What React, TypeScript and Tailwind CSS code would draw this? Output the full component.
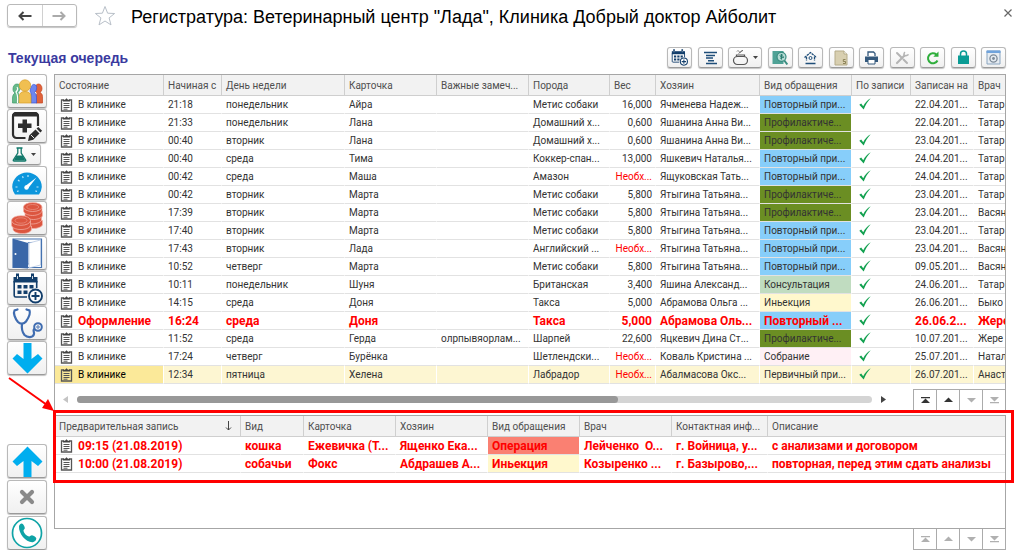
import type { ReactNode } from 'react'
import { clsx } from 'clsx'

type QueueRow = {
  state: string
  time: string
  day: string
  card: string
  note?: string
  breed: string
  weight: string
  owner: string
  kind: string
  booked: boolean
  date: string
  doctor: string
  urgent?: boolean
  selected?: boolean
}

const REPEAT = 'Повторный при...'
const PREVENT = 'Профилактиче...'
const NO_WEIGHT = 'Необх...'

const KIND_COLORS: Record<string, string> = {
  [REPEAT]: 'bg-[#87cefa]',
  'Повторный ...': 'bg-[#87cefa]',
  [PREVENT]: 'bg-[#6b8e23]',
  Консультация: 'bg-[#c0dcc0]',
  Иньекция: 'bg-[#fff8cd]',
  Собрание: 'bg-[#fff0f5]',
  Операция: 'bg-[#fa8072]',
}

const QUEUE: QueueRow[] = [
  { state: 'В клинике', time: '21:18', day: 'понедельник', card: 'Айра', breed: 'Метис собаки', weight: '16,000', owner: 'Ячменева Надеж...', kind: REPEAT, booked: true, date: '22.04.201...', doctor: 'Татар' },
  { state: 'В клинике', time: '21:33', day: 'понедельник', card: 'Лана', breed: 'Домашний х...', weight: '0,600', owner: 'Яшанина Анна Ви...', kind: PREVENT, booked: false, date: '22.04.201...', doctor: 'Татар' },
  { state: 'В клинике', time: '00:40', day: 'вторник', card: 'Лана', breed: 'Домашний х...', weight: '0,600', owner: 'Яшанина Анна Ви...', kind: PREVENT, booked: true, date: '23.04.201...', doctor: 'Татар' },
  { state: 'В клинике', time: '00:40', day: 'среда', card: 'Тима', breed: 'Коккер-спан...', weight: '13,000', owner: 'Яшкевич Наталья...', kind: REPEAT, booked: true, date: '24.04.201...', doctor: 'Татар' },
  { state: 'В клинике', time: '00:42', day: 'среда', card: 'Маша', breed: 'Амазон', weight: NO_WEIGHT, owner: 'Ящуковская Тать...', kind: REPEAT, booked: true, date: '24.04.201...', doctor: 'Татар' },
  { state: 'В клинике', time: '00:42', day: 'вторник', card: 'Марта', breed: 'Метис собаки', weight: '5,800', owner: 'Ятыгина Татьяна...', kind: PREVENT, booked: true, date: '23.04.201...', doctor: 'Татар' },
  { state: 'В клинике', time: '17:39', day: 'вторник', card: 'Марта', breed: 'Метис собаки', weight: '5,800', owner: 'Ятыгина Татьяна...', kind: PREVENT, booked: true, date: '23.04.201...', doctor: 'Васян' },
  { state: 'В клинике', time: '17:40', day: 'вторник', card: 'Марта', breed: 'Метис собаки', weight: '5,800', owner: 'Ятыгина Татьяна...', kind: REPEAT, booked: true, date: '23.04.201...', doctor: 'Татар' },
  { state: 'В клинике', time: '17:43', day: 'вторник', card: 'Лада', breed: 'Английский ...', weight: NO_WEIGHT, owner: 'Ятыгина Татьяна...', kind: REPEAT, booked: true, date: '23.04.201...', doctor: 'Васян' },
  { state: 'В клинике', time: '10:52', day: 'четверг', card: 'Марта', breed: 'Метис собаки', weight: '5,800', owner: 'Ятыгина Татьяна...', kind: REPEAT, booked: true, date: '09.05.201...', doctor: 'Васян' },
  { state: 'В клинике', time: '10:11', day: 'понедельник', card: 'Шуня', breed: 'Британская', weight: '3,400', owner: 'Яшина Александ...', kind: 'Консультация', booked: true, date: '24.06.201...', doctor: 'Татар' },
  { state: 'В клинике', time: '14:15', day: 'среда', card: 'Доня', breed: 'Такса', weight: '5,000', owner: 'Абрамова Ольга ...', kind: 'Иньекция', booked: true, date: '26.06.201...', doctor: 'Быко' },
  { state: 'Оформление', time: '16:24', day: 'среда', card: 'Доня', breed: 'Такса', weight: '5,000', owner: 'Абрамова Оль...', kind: 'Повторный ...', booked: true, date: '26.06.2...', doctor: 'Жере', urgent: true },
  { state: 'В клинике', time: '11:52', day: 'среда', card: 'Герда', note: 'олрпывяорлам...', breed: 'Шарпей', weight: '22,600', owner: 'Яцкевич Дина Ст...', kind: PREVENT, booked: true, date: '10.07.201...', doctor: 'Жере' },
  { state: 'В клинике', time: '17:24', day: 'четверг', card: 'Бурёнка', breed: 'Шетлендски...', weight: NO_WEIGHT, owner: 'Коваль Кристина ...', kind: 'Собрание', booked: true, date: '25.07.201...', doctor: 'Натал' },
  { state: 'В клинике', time: '12:34', day: 'пятница', card: 'Хелена', breed: 'Лабрадор', weight: NO_WEIGHT, owner: 'Абалмасова Окс...', kind: 'Первичный при...', booked: true, date: '26.07.201...', doctor: 'Анаст', selected: true },
]

const BOOKINGS = [
  ['09:15 (21.08.2019)', 'кошка', 'Ежевичка (Т...', 'Ященко Ека...', 'Операция', 'Лейченко  О...', 'г. Войница, у...', 'с анализами и договором'],
  ['10:00 (21.08.2019)', 'собачьи', 'Фокс', 'Абдрашев А...', 'Иньекция', 'Козыренко ...', 'г. Базырово,...', 'повторная, перед этим сдать анализы'],
]

function ClipboardIcon() {
  return (
    <svg width="13" height="14" viewBox="0 0 13 14" className="shrink-0" aria-hidden>
      <path d="M4 2H1.5v11h10V2H9" fill="none" stroke="#555" strokeWidth="1.3" />
      <path d="M3 3.6V1.8h2L6.5.3 8 1.8h2v1.8z" fill="#444" />
      <path d="M3.5 5.5h6M3.5 7.5h6M3.5 9.5h6M3.5 11.2h4" stroke="#555" strokeWidth="1" />
    </svg>
  )
}

function CheckIcon() {
  return (
    <svg width="12" height="13" viewBox="0 0 12 13" className="ml-[3px]" aria-label="да">
      <path d="M.3 6.800 2.200 5.500l2 2.800C6 4.800 8.200 2 11.700.200c-3 3.200-5.200 6.700-7 11.300z" fill="#12a150" />
    </svg>
  )
}

const buttonBase =
  'flex items-center justify-center rounded-[3px] border border-[#b9b9b9] border-b-[#9a9a9a] bg-linear-to-b from-white to-[#f0f0f0] shadow-[0_1px_1px_#c4c4c4]'

function SideButton({ title, small, children }: { title: string; small?: boolean; children: ReactNode }) {
  return (
    <button
      type="button"
      title={title}
      aria-label={title}
      className={clsx(buttonBase, small ? 'h-[21px] w-[34px] gap-1' : 'h-[34px] w-10')}
    >
      {children}
    </button>
  )
}

function ToolButton({ title, wide, children }: { title: string; wide?: boolean; children: ReactNode }) {
  return (
    <button
      type="button"
      title={title}
      aria-label={title}
      className={clsx(buttonBase, 'h-[21px]', wide ? 'w-[34px] gap-1' : 'w-[25px]')}
    >
      {children}
    </button>
  )
}

function Caret() {
  return (
    <svg width="5" height="3" viewBox="0 0 5 3" aria-hidden>
      <path d="M0 0h5L2.500 3z" fill="#444" />
    </svg>
  )
}

function PeopleIcon() {
  return (
    <svg width="31" height="25" viewBox="0 0 31 25" strokeWidth=".7" aria-hidden>
      <g fill="#e0623a" stroke="#c4461f">
        <path d="M24 24v-6c0-2 .500-3 1.500-4-2-1-2.500-2-2.500-4 0-3 1.500-5 3.500-5s3.500 2 3.500 4.500c0 2-.800 3-2 4 1.500.800 2.500 2 2.500 4V24z" />
      </g>
      <g fill="#6d86f0" stroke="#3b55d0">
        <path d="M19 24v-9c0-1-.500-2-1-3 1-6 3-7 4.500-6.500 2 .500 2.500 2 2 4.500-.300 1.800-1 2.500-2 3.500 1.500 1.500 2 3 2 5V24z" />
      </g>
      <g fill="#66b98a" stroke="#3f9c68">
        <path d="M.500 24v-5c0-2.500 1-4 2.500-5-1.500-1-2-2.200-2-4 0-3 1.500-5 4-5s4 2 4 4c-1.500 2-2 3.500-3 4.500 1 2 1 6 .500 10.500z" />
      </g>
      <path d="M5 8c1.500 2 0 4-1 5 1.500 2 2 6 1.500 11" fill="none" stroke="#fff" strokeWidth="1.200" />
      <g fill="#f0bf51" stroke="#d99e28">
        <path d="M7.200 24v-6.500c0-3 2-5 5.800-5s6 2 6 5V24z" />
        <circle cx="13" cy="6.500" r="5.700" />
      </g>
    </svg>
  )
}

function AddRecordIcon() {
  return (
    <svg width="32" height="31" viewBox="0 0 32 31" aria-hidden>
      <path d="M14.500 27H5.500A3.500 3.500 0 0 1 2 23.500V5.500A3.500 3.500 0 0 1 5.500 2h18A3.500 3.500 0 0 1 27 5.500V15" fill="none" stroke="#2d2d2d" strokeWidth="2.200" />
      <path d="M1 5.500A4 4 0 0 1 5 1h19a4 4 0 0 1 4 4.500z" fill="#2d2d2d" />
      <path d="M11.500 8.500h4.500v4h4.500V17H16v4.500h-4.500V17H7v-4.500h4.500z" fill="#2d2d2d" />
      <path d="m17 30 1.200-5.500 6.300-6 4 4-6.300 6.300zM25.500 17.500l1.800-1.600 3.800 3.900-1.700 1.700z" fill="#2d2d2d" />
      <path d="m20 24 3 3" stroke="#fff" strokeWidth=".9" />
    </svg>
  )
}

function FlaskIcon() {
  return (
    <svg width="15" height="15" viewBox="0 0 15 15" aria-hidden>
      <path d="M4.500 1h6M5.800 1v5L1.300 13q-.3 1 .8 1h10.800q1.100 0 .8-1L9.200 6V1" fill="none" stroke="#11786a" strokeWidth="1.300" />
      <path d="M4.500 8.500h6l2.700 4.800H1.800z" fill="#11786a" />
    </svg>
  )
}

function GaugeIcon() {
  return (
    <svg width="30" height="23" viewBox="0 0 30 23" aria-hidden>
      <path d="M3 22.500A14.800 14.800 0 0 1 .200 15C.200 6.800 6.800.400 15 .400S29.800 6.800 29.800 15a14.800 14.800 0 0 1-2.800 7.500z" fill="#0c96dc" />
      <path d="M15.800 16.800 24.500 5.500 13.300 14z" fill="#fff" />
      <circle cx="14.500" cy="15.500" r="2.200" fill="#fff" />
      <path d="M3.500 15h2M6 8l1.500 1.300M10.500 4.300l.7 1.700M16 3v2M24.500 15h2M5 19.500l1.600-.6M25 19.500l-1.600-.6" stroke="#bfe6fa" strokeWidth="1.200" />
    </svg>
  )
}

function CoinsIcon() {
  return (
    <svg width="32" height="32" viewBox="0 0 32 32" aria-hidden>
      <g fill="#dc5640" stroke="#f3b5aa" strokeWidth=".7">
        <path d="M14 18.500v4c0 2 4 4 8.500 4s9-2 9-4v-4z" />
        <path d="M12.500 14v4c0 2 4 4 8.500 4s9.500-2 9.500-4v-4z" />
        <path d="M14 9.500v4c0 2 4 4 8.500 4s9-2 9-4v-4z" />
        <path d="M12.500 5v4c0 2 4 4.500 9 4.500s9.500-2.500 9.500-4.500V5z" />
        <ellipse cx="21.700" cy="5" rx="9.300" ry="4.500" />
        <path d="M2 24v3c0 2.500 4 4.500 9.500 4.500s9-2 9-4.500v-3z" />
        <path d="M.500 19v4c0 2.500 4 4.500 9.500 4.500s9.500-2 9.500-4.500v-4z" />
        <ellipse cx="10" cy="18.500" rx="9.500" ry="4.800" />
      </g>
      <ellipse cx="21.700" cy="5" rx="6" ry="2.500" fill="none" stroke="#e88a7a" strokeWidth=".8" />
      <ellipse cx="10" cy="18.500" rx="6" ry="2.700" fill="none" stroke="#e88a7a" strokeWidth=".8" />
    </svg>
  )
}

function DoorIcon() {
  return (
    <svg width="31" height="31" viewBox="0 0 31 31" aria-hidden>
      <path d="M1 1h28.500v28.500H1z" fill="#fff" stroke="#4472b0" strokeWidth="1.200" />
      <path d="M16 4.500h11.500V26H16z" fill="#fff" stroke="#6c8fc0" strokeWidth="1" />
      <path d="M1 .800 16 5v25.500L1 29.500z" fill="#3a67a8" />
      <path d="M17 5 28.500 2v25L17 30z" fill="#fff" stroke="#9db6d8" strokeWidth=".6" />
      <circle cx="3.500" cy="16" r="1" fill="#fff" />
    </svg>
  )
}

function CalendarPlusIcon({ size = 31 }: { size?: number }) {
  return (
    <svg width={size} height={size} viewBox="0 0 31 31" aria-hidden>
      <path d="M1.500 4h24v5.500h-24z" fill="#123e6b" />
      <path d="M5.500.500v5M20.500.500v5" stroke="#123e6b" strokeWidth="3" />
      <path d="M5.500 3v3M20.500 3v3" stroke="#fff" strokeWidth=".8" />
      <path d="M2.200 8v14.500q0 1.500 1.500 1.500H15M24.700 8v7" fill="none" stroke="#123e6b" strokeWidth="1.600" />
      <path d="M5.500 12h4v3.500h-4zM11.500 12h4v3.500h-4zM17.500 12h4v3.500h-4zM5.500 17.500h4V21h-4zM11.500 17.500h4V21h-4z" fill="#123e6b" />
      <circle cx="23.500" cy="23" r="6.500" fill="#fff" stroke="#123e6b" strokeWidth="1.900" />
      <path d="M23.500 19v8M19.500 23h8" stroke="#123e6b" strokeWidth="1.900" />
    </svg>
  )
}

function StethoscopeIcon() {
  return (
    <svg width="31" height="31" viewBox="0 0 31 31" fill="none" stroke="#3f6cb0" aria-hidden>
      <path d="M5.500 1.500 2.500 2.500C1 5 3 10.500 6 14c2.500 2.500 6 2 8-.5 2.500-3.500 4.500-8.500 3.500-11L14.500 1.500" strokeWidth="2.200" strokeLinecap="round" />
      <path d="M10 15.500c-.5 4 0 8.500 2.500 11.500 3 3 8.500 3 9.500-1 .5-2-2-4.500 1-5.500" strokeWidth="2.200" />
      <circle cx="26" cy="19" r="3.800" strokeWidth="2" />
      <circle cx="26" cy="19" r="1.200" strokeWidth="1" />
    </svg>
  )
}

function BigArrowIcon({ up }: { up?: boolean }) {
  return (
    <svg width="31" height="31" viewBox="0 0 31 31" className={clsx(up && 'rotate-180')} aria-hidden>
      <path d="M11.500 0h8v16l6.500-5 4.500 4.500L15.500 30.500.500 15.500 5 11l6.500 5z" fill="#00aeef" />
    </svg>
  )
}

function CrossIcon() {
  return (
    <svg width="16" height="16" viewBox="0 0 16 16" aria-hidden>
      <path d="m3 3 10 10M13 3 3 13" stroke="#8a8a8a" strokeWidth="4.200" strokeLinecap="round" />
    </svg>
  )
}

function PhoneIcon() {
  return (
    <svg width="32" height="32" viewBox="0 0 32 32" aria-hidden>
      <circle cx="16" cy="16" r="14.500" fill="#fff" stroke="#0fa3a6" strokeWidth="1.700" />
      <path d="M8 9.500c0-1.500 1.500-3 2.700-3 1.600 0 3.300 3.500 3.100 4.800-.2 1-1.500 1.500-1.300 2.700.5 2.500 3 5 5.500 5.500 1.200.2 1.800-1.300 3-1.200 1.500.2 4.300 2 4.300 3.200 0 2-2 3.500-3.600 3.700C15 25.700 7.500 16.500 8 9.500z" fill="#0fa3a6" />
    </svg>
  )
}

function PagerButtons({ active }: { active?: boolean }) {
  const arrows = [
    { title: 'В начало', d: 'M0 1h9v1.300H0zM4.500 2.500 9 7H0z', on: active },
    { title: 'Вверх', d: 'M4.500 1.500 9 6H0z', on: active },
    { title: 'Вниз', d: 'M0 2h9L4.500 6.500z', on: false },
    { title: 'В конец', d: 'M0 1h9L4.500 5.500zM0 6h9v1.300H0z', on: false },
  ]
  return (
    <div className="flex">
      {arrows.map((a) => (
        <button
          key={a.title}
          type="button"
          title={a.title}
          aria-label={a.title}
          className={clsx('flex h-5 w-[23px] items-center justify-center border-l border-[#ababab]', a.on ? 'text-[#333]' : 'text-[#b0b0b0]')}
        >
          <svg width="9" height="8" viewBox="0 0 9 8" aria-hidden>
            <path d={a.d} fill="currentColor" />
          </svg>
        </button>
      ))}
    </div>
  )
}

function HeadCell({ children }: { children: ReactNode }) {
  return (
    <th
      scope="col"
      className="h-[21px] overflow-hidden border-r border-b border-[#cfcfcf] bg-[#f2f2f2] pl-1 text-left font-normal whitespace-nowrap text-[#4f4f4f] last:border-r-0"
    >
      {children}
    </th>
  )
}

function Cell({ children, className }: { children?: ReactNode; className?: string }) {
  return (
    <td className={clsx('h-[18px] overflow-hidden border-r border-b border-r-white border-b-[#e2e2e2] pl-1 leading-4 whitespace-pre last:border-r-0', className)}>
      {children}
    </td>
  )
}

function Columns({ widths }: { widths: string[] }) {
  return (
    <colgroup>
      {widths.map((w, i) => (
        <col key={i} className={w} />
      ))}
    </colgroup>
  )
}

function QueueTable() {
  return (
    <table className="w-full table-fixed border-separate border-spacing-0">
      <Columns widths={['w-[109px]', 'w-[58px]', 'w-[123px]', 'w-[92px]', 'w-[92px]', 'w-[81px]', 'w-[46px]', 'w-[104px]', 'w-[92px]', 'w-[59px]', 'w-[63px]', 'w-auto']} />
      <thead>
        <tr>
          {['Состояние', 'Начиная с', 'День недели', 'Карточка', 'Важные замеч...', 'Порода', 'Вес', 'Хозяин', 'Вид обращения', 'По записи', 'Записан на', 'Врач'].map((h) => (
            <HeadCell key={h}>{h}</HeadCell>
          ))}
        </tr>
      </thead>
      <tbody>
        {QUEUE.map((r, i) => (
          <tr key={i} className={clsx(r.urgent && 'text-xs font-bold text-[#f00]', r.selected && 'bg-[#fdf6d2]')}>
            <Cell className={clsx(r.selected && 'bg-[#fbe999] text-black')}>
              <span className="flex items-center gap-[5px] pl-px">
                <ClipboardIcon />
                {r.state}
              </span>
            </Cell>
            <Cell>{r.time}</Cell>
            <Cell>{r.day}</Cell>
            <Cell>{r.card}</Cell>
            <Cell>{r.note}</Cell>
            <Cell>{r.breed}</Cell>
            <Cell className={clsx('pr-[3px] text-right', r.weight === NO_WEIGHT && 'text-[#f00]')}>{r.weight}</Cell>
            <Cell>{r.owner}</Cell>
            <Cell className={KIND_COLORS[r.kind]}>{r.kind}</Cell>
            <Cell>{r.booked && <CheckIcon />}</Cell>
            <Cell>{r.date}</Cell>
            <Cell>{r.doctor}</Cell>
          </tr>
        ))}
      </tbody>
    </table>
  )
}

function BookingTable() {
  return (
    <table className="w-full table-fixed border-separate border-spacing-0">
      <Columns widths={['w-[186px]', 'w-[63px]', 'w-[92px]', 'w-[92px]', 'w-[92px]', 'w-[92px]', 'w-[96px]', 'w-auto']} />
      <thead>
        <tr>
          <HeadCell>
            <span className="flex items-center justify-between pr-2">
              Предварительная запись
              <svg width="7" height="10" viewBox="0 0 7 10" fill="none" stroke="#444" aria-hidden>
                <path d="M3.500 0v9M1 6.500 3.500 9 6 6.500" />
              </svg>
            </span>
          </HeadCell>
          {['Вид', 'Карточка', 'Хозяин', 'Вид обращения', 'Врач', 'Контактная инф...', 'Описание'].map((h) => (
            <HeadCell key={h}>{h}</HeadCell>
          ))}
        </tr>
      </thead>
      <tbody className="text-xs font-bold text-[#f00]">
        {BOOKINGS.map((row) => (
          <tr key={row[0]}>
            {row.map((value, i) => (
              <Cell key={i} className={KIND_COLORS[value]}>
                {i === 0 ? (
                  <span className="flex items-center gap-[5px] pl-px">
                    <ClipboardIcon />
                    {value}
                  </span>
                ) : (
                  value
                )}
              </Cell>
            ))}
          </tr>
        ))}
      </tbody>
    </table>
  )
}

function Toolbar() {
  return (
    <div className="flex w-[339px] justify-between">
      <ToolButton title="Записать на приём">
        <CalendarPlusIcon size={17} />
      </ToolButton>
      <ToolButton title="График">
        <svg width="15" height="14" viewBox="0 0 15 14" stroke="#1f4e79" strokeWidth="1.500" aria-hidden>
          <path d="M1 1.500h13M3 4.500h9M3 7h7M5 9.700h6M3 12.500h11" />
        </svg>
      </ToolButton>
      <ToolButton title="Корм" wide>
        <svg width="17" height="17" viewBox="0 0 17 17" fill="none" stroke="#555" strokeWidth="1.200" aria-hidden>
          <rect x="1.500" y="7.500" width="14" height="8" rx="4" />
          <path d="M4.500 7.500V6h8v1.500" />
          <path d="M5 2.500q1-2 2 0t2 0 2-.5M6.500 4.500l4-3" strokeWidth=".8" />
        </svg>
        <Caret />
      </ToolButton>
      <ToolButton title="Поиск оплат">
        <svg width="16" height="16" viewBox="0 0 16 16" aria-hidden>
          <path d="M.500 1h11v13h-11z" fill="#4fa296" />
          <circle cx="9.500" cy="6.800" r="4.500" fill="#b5dbd4" stroke="#3a8d80" strokeWidth="1.200" />
          <path d="m12.300 10.500 3 4" stroke="#3a8d80" strokeWidth="2" />
          <path d="M11 5.200q-3-1-3 .5t3 1.300-3 1.300M9.500 4v5.600" fill="none" stroke="#24786c" strokeWidth=".9" />
        </svg>
      </ToolButton>
      <ToolButton title="Стационар">
        <svg width="15" height="14" viewBox="0 0 15 14" fill="none" stroke="#1f4e79" aria-hidden>
          <path d="M1.500 6.500 7.500 1.500l6 5M3.500 6v3.500M11.500 6v3.500" strokeWidth="1.300" strokeDasharray="2.500 .6" />
          <circle cx="7.500" cy="7" r="1.500" />
          <path d="M2.500 12.500h10" strokeWidth="1.500" />
        </svg>
      </ToolButton>
      <ToolButton title="Счёт">
        <svg width="14" height="16" viewBox="0 0 14 16" aria-hidden>
          <path d="M1 1h9l3 3v11H1z" fill="#d8cfb0" stroke="#b5ab88" />
          <path d="M10 1v3h3" fill="#fff" stroke="#b5ab88" />
          <path d="M11.500 9.500H9.300v2h2.200v2H9" fill="none" stroke="#857b4e" strokeWidth=".9" />
        </svg>
      </ToolButton>
      <ToolButton title="Печать">
        <svg width="15" height="14" viewBox="0 0 15 14" aria-hidden>
          <path d="M4 5V1h5.500L11 2.500V5" fill="#fff" stroke="#33587c" strokeWidth="1.300" />
          <path d="M1 5.500h13V11H1z" fill="#33587c" />
          <path d="M4 8.500h7V13H4z" fill="#fff" stroke="#33587c" />
        </svg>
      </ToolButton>
      <ToolButton title="Настройка">
        <svg width="14" height="14" viewBox="0 0 14 14" fill="none" stroke="#b4b4b4" strokeLinecap="round" aria-hidden>
          <path d="m2 2 5 5M8.500 8.500l3.500 3.500" strokeWidth="2" />
          <path d="m2 12 7.500-7.500" strokeWidth="2.200" />
          <path d="M9.500 1.500q-1.300 3 .5 3.200 1.500.2 3-.9" strokeWidth="1.500" />
        </svg>
      </ToolButton>
      <ToolButton title="Обновить">
        <svg width="14" height="14" viewBox="0 0 14 14" aria-hidden>
          <path d="M11.500 9.500a5 5 0 1 1-1.200-6" fill="none" stroke="#2fae3c" strokeWidth="2" />
          <path d="M12.500.500v5.200H7.300z" fill="#2fae3c" />
        </svg>
      </ToolButton>
      <ToolButton title="Закрыть смену">
        <svg width="13" height="15" viewBox="0 0 13 15" aria-hidden>
          <path d="M3.500 6V4a3 3 0 0 1 6 0v2" fill="none" stroke="#0a9c95" strokeWidth="1.500" />
          <path d="M1 5.500h11V14H1z" fill="#0a9c95" />
        </svg>
      </ToolButton>
      <ToolButton title="Параметры">
        <svg width="15" height="15" viewBox="0 0 15 15" aria-hidden>
          <path d="M1 1h13v13H1z" fill="#e6ecf2" stroke="#8aa5c0" />
          <path d="M.500.500h14V3H.500z" fill="#6fa3dc" />
          <circle cx="7.500" cy="8.500" r="3.600" fill="none" stroke="#7c8a98" strokeWidth="1.300" />
          <circle cx="7.500" cy="8.500" r="1.400" fill="#7c8a98" />
        </svg>
      </ToolButton>
    </div>
  )
}

function NavArrow({ className, flip }: { className: string; flip?: boolean }) {
  return (
    <svg width="14" height="10" viewBox="0 0 14 10" className={clsx(className, flip && 'rotate-180')} fill="none" stroke="currentColor" strokeWidth="2" aria-hidden>
      <path d="M13.500 5H2M5.500 1 1.500 5l4 4" />
    </svg>
  )
}

export default function App() {
  return (
    <main className="bg-white pt-1 pl-[7px] font-['Liberation_Sans',Arial,sans-serif] text-[#333]">
      <header className="flex h-[43px] items-start">
        <div className="flex h-[23px] w-[70px] rounded-[3px] border border-[#b9b9b9] shadow-[0_1px_1px_#c4c4c4]">
          <button type="button" aria-label="Назад" className="flex flex-1 items-center justify-center border-r border-[#d0d0d0]">
            <NavArrow className="text-[#444]" />
          </button>
          <button type="button" aria-label="Вперёд" className="flex flex-1 items-center justify-center">
            <NavArrow className="text-[#aaa]" flip />
          </button>
        </div>
        <button type="button" aria-label="В избранное" className="ml-[17px] pt-px">
          <svg width="22" height="22" viewBox="0 0 22 22" fill="none" stroke="#b8bfc8" aria-hidden>
            <path d="m11 1.500 2.600 6.700 7 .3-5.500 4.400 1.900 7L11 16l-6 3.900 1.900-7L1.400 8.500l7-.3z" />
          </svg>
        </button>
        <h1 className="ml-[15px] text-lg leading-[26px] whitespace-nowrap text-black">
          Регистратура: Ветеринарный центр "Лада", Клиника Добрый доктор Айболит
        </h1>
        <button type="button" aria-label="Закрыть" className="mt-[5px] mr-3 ml-auto">
          <svg width="8" height="8" viewBox="0 0 8 8" stroke="#666" strokeWidth="1.200" aria-hidden>
            <path d="m.5.5 7 7M7.500.5l-7 7" />
          </svg>
        </button>
      </header>

      <div className="flex h-[27px] items-start justify-between pr-[18px]">
        <h2 className="pl-px text-sm leading-[22px] font-bold text-[#3a3a9f]">Текущая очередь</h2>
        <Toolbar />
      </div>

      <div className="relative flex gap-[7px] pr-[18px]">
        <aside className="flex w-10 shrink-0 flex-col justify-between">
          <div className="flex flex-col gap-px">
            <SideButton title="Клиенты"><PeopleIcon /></SideButton>
            <SideButton title="Новая запись"><AddRecordIcon /></SideButton>
            <SideButton title="Анализы" small>
              <FlaskIcon />
              <Caret />
            </SideButton>
            <SideButton title="Показатели"><GaugeIcon /></SideButton>
            <SideButton title="Оплата"><CoinsIcon /></SideButton>
            <SideButton title="Выход"><DoorIcon /></SideButton>
            <SideButton title="Расписание"><CalendarPlusIcon /></SideButton>
            <SideButton title="Приём"><StethoscopeIcon /></SideButton>
            <SideButton title="Переместить вниз"><BigArrowIcon /></SideButton>
          </div>
          <div className="flex flex-col gap-0.5">
            <SideButton title="Переместить вверх"><BigArrowIcon up /></SideButton>
            <SideButton title="Удалить"><CrossIcon /></SideButton>
            <SideButton title="Позвонить"><PhoneIcon /></SideButton>
          </div>
        </aside>

        <div className="min-w-0 flex-1 font-[Roboto,'Liberation_Sans',sans-serif] text-[10px]">
          <section className="border border-[#a6a6a6]">
            <QueueTable />
            <div className="mt-[5px] flex items-center">
              <svg width="5" height="7" viewBox="0 0 5 7" className="ml-2 shrink-0" aria-hidden>
                <path d="M5 0v7L0 3.500z" fill="#c4c4c4" />
              </svg>
              <div className="ml-[9px] h-[7px] flex-1 rounded-full bg-[#d4d4d4]">
                <div className="h-full w-[68%] rounded-full bg-[#989898]" />
              </div>
              <svg width="5" height="7" viewBox="0 0 5 7" className="mr-[27px] ml-[9px] shrink-0" aria-hidden>
                <path d="M0 0v7l5-3.500z" fill="#444" />
              </svg>
              <div className="border-t border-[#ababab]">
                <PagerButtons active />
              </div>
            </div>
          </section>

          <section className="relative mt-[4px]">
            <div className="h-[114px] border border-[#a6a6a6]">
              <BookingTable />
            </div>
            <div className="flex justify-end">
              <div className="border-r border-b border-[#ababab]">
                <PagerButtons />
              </div>
            </div>
            <div className="pointer-events-none absolute -top-[5px] -right-2 -left-px h-[73px] border-[3px] border-[#f00]" />
          </section>
        </div>

        {/* callout arrow from the sidebar to the booking list */}
        <svg width="48" height="36" viewBox="0 0 48 36" className="pointer-events-none absolute top-[303px] left-0" aria-hidden>
          <path d="M2 1 40 28" stroke="#f00" strokeWidth="2" />
          <path d="M47 34 35 31l6-9z" fill="#f00" />
        </svg>
      </div>
    </main>
  )
}
